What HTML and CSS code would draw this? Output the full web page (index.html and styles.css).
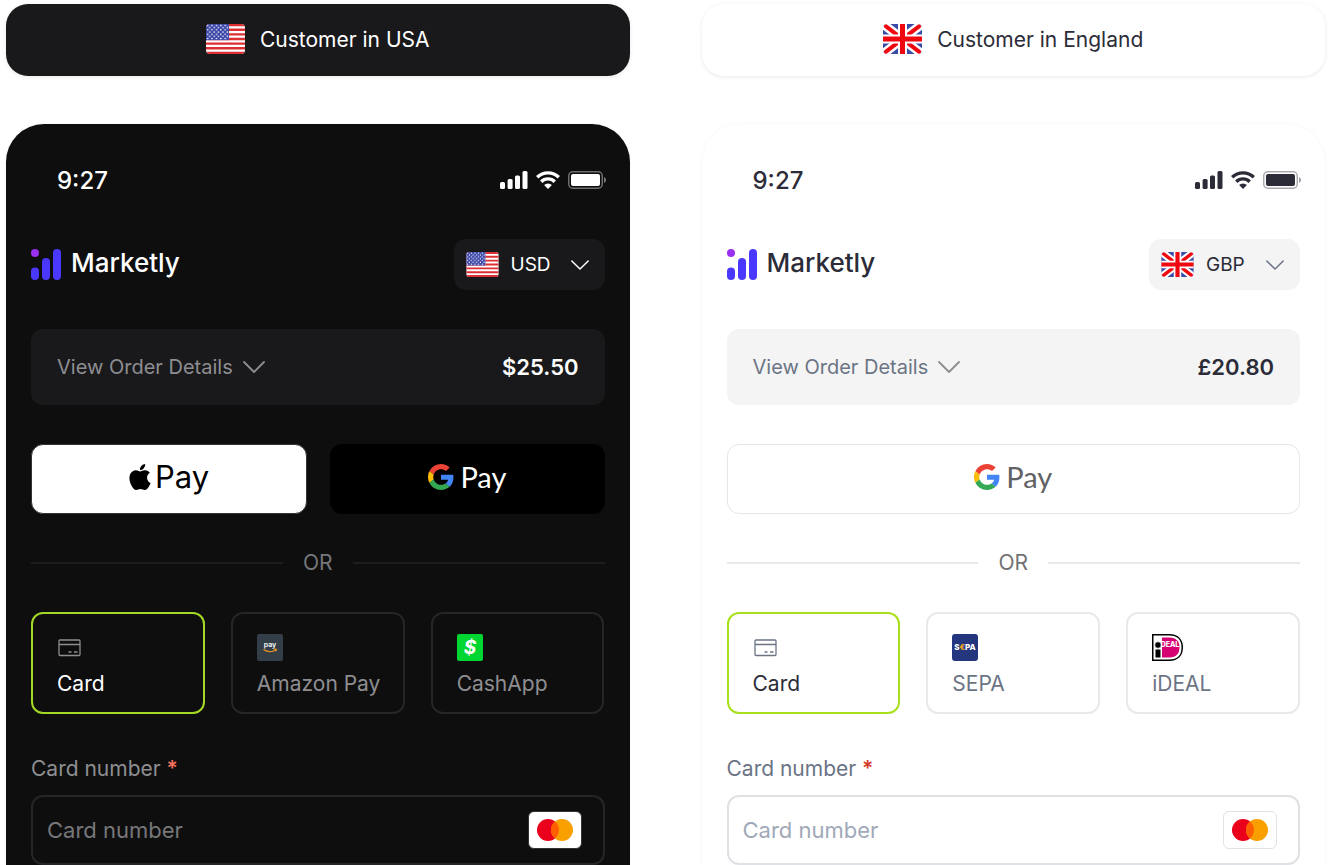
FILE: index.html
```html
<!DOCTYPE html>
<html lang="en">

<head>
  <meta charset="UTF-8" />
  <meta name="viewport" content="width=device-width, initial-scale=1.0" />
  <title>Marketly Checkout</title>
  <link rel="stylesheet" href="styles.css">
</head>

<body>
  <!-- shared icons -->
  <svg class="sprite" aria-hidden="true">
    <defs>
      <clipPath id="flag-clip"><rect width="39" height="30" rx="4" /></clipPath>
      <pattern id="stars" width="4.4" height="4.4" patternUnits="userSpaceOnUse">
        <circle cx="1.6" cy="1.4" r=".8" fill="#fff" />
        <circle cx="3.8" cy="3.6" r=".8" fill="#fff" />
      </pattern>
    </defs>
    <symbol id="flag-us" viewBox="0 0 39 30">
      <g clip-path="url(#flag-clip)">
        <rect width="39" height="30" fill="#fff" />
        <path stroke="#dc2f34" stroke-width="2.3" d="M0 1.15h39M0 5.77h39M0 10.38h39M0 15h39M0 19.62h39M0 24.23h39M0 28.85h39" />
        <rect width="23" height="16.15" fill="#3b48a8" />
        <rect width="23" height="15.6" fill="url(#stars)" />
      </g>
    </symbol>
    <symbol id="flag-gb" viewBox="0 0 39 30">
      <g clip-path="url(#flag-clip)">
        <rect width="39" height="30" fill="#3b4ba8" />
        <path stroke="#fff" stroke-width="9" d="M0 0l39 30M39 0L0 30" />
        <path stroke="#f00810" stroke-width="4" stroke-linecap="round" d="M3 2.300l33 25.400M36 2.300L3 27.700" />
        <path stroke="#fff" stroke-width="9" d="M19.5 0v30M0 15h39" />
        <path stroke="#f00810" stroke-width="5" d="M19.5 0v30M0 15h39" />
      </g>
    </symbol>
    <symbol id="signal" viewBox="0 0 28 18">
      <rect x="0" y="11" width="5" height="7" rx="1.5" />
      <rect x="7.6" y="8" width="5" height="10" rx="1.5" />
      <rect x="15" y="4.5" width="5" height="13.5" rx="1.5" />
      <rect x="22.5" y="0" width="5" height="18" rx="1.5" />
    </symbol>
    <symbol id="wifi" viewBox="0 0 24 18">
      <path fill="none" stroke="currentColor" stroke-width="3.4" d="M1.2 6.3a15.4 15.4 0 0 1 21.6 0M5.3 10.7a9.4 9.4 0 0 1 13.4 0" />
      <path d="M12 18l-3.9-4a5.6 5.6 0 0 1 7.8 0z" />
    </symbol>
    <symbol id="battery" viewBox="0 0 39 18">
      <rect x=".75" y=".75" width="33.5" height="16.5" rx="4" fill="none" stroke="currentColor" stroke-width="1.5" opacity=".4" />
      <rect x="3" y="3" width="29" height="12" rx="2" />
      <path d="M36 6a3.2 3.2 0 0 1 0 6z" opacity=".45" />
    </symbol>
    <symbol id="chevron" viewBox="0 0 22 12">
      <path fill="none" stroke="currentColor" stroke-width="1.8" stroke-linecap="round" stroke-linejoin="round" d="M1 1l10 10L21 1" />
    </symbol>
    <symbol id="logo" viewBox="0 0 30 31">
      <circle cx="4" cy="4" r="4" fill="#9b30f0" />
      <g fill="#4b38ff">
        <rect y="18.5" width="8" height="12.5" rx="4" />
        <rect x="11" y="9" width="8" height="22" rx="4" />
        <rect x="22" width="8" height="31" rx="4" />
      </g>
    </symbol>
    <symbol id="apple" viewBox="2 0 20 24">
      <path d="M12.152 6.896c-.948 0-2.415-1.078-3.96-1.04-2.04.027-3.91 1.183-4.961 3.014-2.117 3.675-.546 9.103 1.519 12.09 1.013 1.454 2.208 3.09 3.792 3.039 1.52-.065 2.09-.987 3.935-.987 1.831 0 2.35.987 3.96.948 1.637-.026 2.676-1.48 3.676-2.948 1.156-1.688 1.636-3.325 1.662-3.415-.039-.013-3.182-1.221-3.22-4.857-.026-3.04 2.48-4.494 2.597-4.559-1.429-2.09-3.623-2.324-4.39-2.376-2-.156-3.675 1.09-4.61 1.09zM15.53 3.83c.843-1.012 1.4-2.427 1.245-3.83-1.207.052-2.662.805-3.532 1.818-.78.896-1.454 2.338-1.273 3.714 1.338.104 2.715-.688 3.559-1.701" />
    </symbol>
    <symbol id="google" viewBox="0 0 48 48">
      <path fill="#ea4335" d="M24 9.5c3.54 0 6.71 1.22 9.21 3.6l6.85-6.85C35.9 2.38 30.47 0 24 0 14.62 0 6.51 5.38 2.56 13.22l7.98 6.19C12.43 13.72 17.74 9.5 24 9.5z" />
      <path fill="#4285f4" d="M46.98 24.55c0-1.57-.15-3.09-.38-4.55H24v9.02h12.94c-.58 2.96-2.26 5.48-4.78 7.18l7.73 6c4.51-4.18 7.09-10.36 7.09-17.65z" />
      <path fill="#fbbc05" d="M10.53 28.59c-.48-1.45-.76-2.99-.76-4.59s.27-3.14.76-4.59l-7.98-6.19C.92 16.46 0 20.12 0 24c0 3.88.92 7.54 2.56 10.78l7.97-6.19z" />
      <path fill="#34a853" d="M24 48c6.48 0 11.93-2.13 15.89-5.81l-7.73-6c-2.15 1.45-4.92 2.3-8.16 2.3-6.26 0-11.57-4.22-13.47-9.91l-7.98 6.19C6.51 42.62 14.62 48 24 48z" />
    </symbol>
    <symbol id="card" viewBox="0 0 26 27">
      <path fill="none" stroke="currentColor" stroke-width="1.3" d="M3 6h19a1 1 0 0 1 1 1v13.5a1 1 0 0 1-1 1H3a1 1 0 0 1-1-1V7a1 1 0 0 1 1-1zM2 10.5h21M11.500 18h3M17 18h3.500" />
    </symbol>
    <symbol id="mastercard" viewBox="0 0 36 22">
      <circle cx="11" cy="11" r="11" fill="#eb001b" />
      <circle cx="25" cy="11" r="11" fill="#f9a000" />
      <path fill="#ff5f00" d="M18 2.500a11 11 0 0 1 0 17 11 11 0 0 1 0-17z" />
    </symbol>
  </svg>

  <main class="demo">
    <section class="column dark">
      <button class="tab" type="button">
        <svg class="tab-flag"><use href="#flag-us" /></svg>
        Customer in USA
      </button>

      <div class="phone">
        <div class="status">
          <span>9:27</span>
          <div class="status-icons">
            <svg class="signal"><use href="#signal" /></svg>
            <svg class="wifi"><use href="#wifi" /></svg>
            <svg class="battery"><use href="#battery" /></svg>
          </div>
        </div>

        <form class="checkout">
          <header class="header">
            <div class="brand">
              <svg class="logo"><use href="#logo" /></svg>
              <span class="brand-name">Marketly</span>
            </div>
            <div class="currency">
              <svg class="flag"><use href="#flag-us" /></svg>
              <select aria-label="Currency">
                <option>USD</option>
                <option>GBP</option>
              </select>
              <svg class="arrow"><use href="#chevron" /></svg>
            </div>
          </header>

          <div class="order">
            <button class="order-toggle" type="button">
              View Order Details
              <svg class="chevron"><use href="#chevron" /></svg>
            </button>
            <span class="price">$25.50</span>
          </div>

          <div class="wallets">
            <button class="wallet apple-pay" type="button">
              <svg class="apple"><use href="#apple" /></svg>
              Pay
            </button>
            <button class="wallet google-pay" type="button">
              <svg class="google"><use href="#google" /></svg>
              Pay
            </button>
          </div>

          <div class="divider">OR</div>

          <div class="methods">
            <label class="method">
              <input type="radio" name="method-us" checked>
              <svg class="method-icon"><use href="#card" /></svg>
              Card
            </label>
            <label class="method">
              <input type="radio" name="method-us">
              <svg class="method-icon" viewBox="0 0 26 27">
                <rect width="26" height="27" rx="2" fill="#333e48" />
                <text class="amazon-text" x="13" y="13">pay</text>
                <path fill="none" stroke="#f79a1f" stroke-width="1.1" d="M6.5 15.5c4 2.6 9 2.6 12.3.4M17 15.2h2.400l-.6 2.200" />
              </svg>
              Amazon Pay
            </label>
            <label class="method">
              <input type="radio" name="method-us">
              <svg class="method-icon" viewBox="0 0 26 27">
                <rect width="26" height="27" rx="2" fill="#00d632" />
                <text class="cash-text" x="13" y="20">$</text>
              </svg>
              CashApp
            </label>
          </div>

          <label class="field-label" for="card-us">Card number <span class="required">*</span></label>
          <div class="field">
            <input type="text" id="card-us" placeholder="Card number" inputmode="numeric">
            <span class="card-brand"><svg class="mastercard"><use href="#mastercard" /></svg></span>
          </div>
        </form>
      </div>
    </section>

    <section class="column light">
      <button class="tab" type="button">
        <svg class="tab-flag"><use href="#flag-gb" /></svg>
        Customer in England
      </button>

      <div class="phone">
        <div class="status">
          <span>9:27</span>
          <div class="status-icons">
            <svg class="signal"><use href="#signal" /></svg>
            <svg class="wifi"><use href="#wifi" /></svg>
            <svg class="battery"><use href="#battery" /></svg>
          </div>
        </div>

        <form class="checkout">
          <header class="header">
            <div class="brand">
              <svg class="logo"><use href="#logo" /></svg>
              <span class="brand-name">Marketly</span>
            </div>
            <div class="currency">
              <svg class="flag"><use href="#flag-gb" /></svg>
              <select aria-label="Currency">
                <option>GBP</option>
                <option>USD</option>
              </select>
              <svg class="arrow"><use href="#chevron" /></svg>
            </div>
          </header>

          <div class="order">
            <button class="order-toggle" type="button">
              View Order Details
              <svg class="chevron"><use href="#chevron" /></svg>
            </button>
            <span class="price">£20.80</span>
          </div>

          <div class="wallets">
            <button class="wallet google-pay" type="button">
              <svg class="google"><use href="#google" /></svg>
              Pay
            </button>
          </div>

          <div class="divider">OR</div>

          <div class="methods">
            <label class="method">
              <input type="radio" name="method-gb" checked>
              <svg class="method-icon"><use href="#card" /></svg>
              Card
            </label>
            <label class="method">
              <input type="radio" name="method-gb">
              <svg class="method-icon" viewBox="0 0 26 27">
                <rect width="26" height="27" rx="3" fill="#24367e" />
                <text class="sepa-text" x="13" y="16">S<tspan fill="#e9a51f">€</tspan>PA</text>
              </svg>
              SEPA
            </label>
            <label class="method">
              <input type="radio" name="method-gb">
              <svg class="method-icon wide" viewBox="0 0 31 27">
                <path fill="#fff" stroke="#000" stroke-width="1.5" d="M.75.75h16.5c8.500 0 13 5 13 12.75s-4.500 12.75-13 12.75H.75z" />
                <path fill="#d50172" d="M10 3.500h7.500c6.500 0 10 3.800 10 10s-3.500 10-10 10H10z" />
                <circle cx="6" cy="11" r="3.200" fill="#000" stroke="#fff" stroke-width=".6" />
                <rect x="3.500" y="15.500" width="5" height="8" fill="#000" />
                <text class="ideal-text" x="18" y="13">DEAL</text>
              </svg>
              iDEAL
            </label>
          </div>

          <label class="field-label" for="card-gb">Card number <span class="required">*</span></label>
          <div class="field">
            <input type="text" id="card-gb" placeholder="Card number" inputmode="numeric">
            <span class="card-brand"><svg class="mastercard"><use href="#mastercard" /></svg></span>
          </div>
        </form>
      </div>
    </section>
  </main>
</body>

</html>
```
FILE: styles.css
```css
* {
  box-sizing: border-box;
}

body {
  margin: 0;
  background: #fff;
  font-family: Inter, "Liberation Sans", sans-serif;
  font-size: 21px;
}

button,
input,
select {
  margin: 0;
  padding: 0;
  border: 0;
  background: none;
  color: inherit;
  font: inherit;
}

button,
.method {
  cursor: pointer;
}

svg {
  display: block;
  flex: none;
  fill: currentColor;
}

.sprite {
  position: absolute;
  width: 0;
  height: 0;
}

.dark {
  --tab: #19191b;
  --screen: #0e0e0e;
  --panel: #19191b;
  --text: #fff;
  --muted: #8e8e92;
  --placeholder: #77777a;
  --or: #77777a;
  --line: #262628;
  --field-line: #262628;
  --card-line: #333;
  --arrow: #fff;
  --chevron: #8e8e92;
  --green: #a3d826;
  --required: #f4705c;
}

.light {
  --tab: #fff;
  --screen: #fff;
  --panel: #f4f4f4;
  --text: #2b2c38;
  --muted: #6b7485;
  --placeholder: #a1a9b8;
  --or: #727274;
  --line: #e9e9eb;
  --field-line: #dfe1e5;
  --card-line: #e3e3e5;
  --arrow: #6b7485;
  --chevron: #8e8e92;
  --green: #a8e01c;
  --required: #d63a2b;
}

.demo {
  display: grid;
  grid-template-columns: 1fr 1fr;
  gap: 72px;
  padding: 4px 6px 0;
}

.column {
  color: var(--text);
}

.tab {
  display: flex;
  align-items: center;
  justify-content: center;
  gap: 15px;
  width: 100%;
  height: 72px;
  padding-bottom: 2px;
  border-radius: 22px;
  background: var(--tab);
  box-shadow: 0 1px 4px rgba(0, 0, 0, .09);
}

.tab-flag {
  width: 39px;
  height: 30px;
}

.phone {
  margin-top: 48px;
  padding-top: 42px;
  border-radius: 38px 38px 0 0;
  background: var(--screen);
  box-shadow: 0 0 3px rgba(0, 0, 0, .05);
}

.status {
  display: flex;
  align-items: center;
  justify-content: space-between;
  padding: 0 23px 0 51px;
  font-size: 24px;
  font-weight: 500;
  line-height: 30px;
}

.status-icons {
  display: flex;
  align-items: center;
  gap: 8px;
  padding-bottom: 2px;
}

.signal {
  width: 28px;
  height: 18px;
}

.wifi {
  width: 24px;
  height: 18px;
}

.battery {
  width: 39px;
  height: 18px;
}

.checkout {
  padding: 43px 25px 0;
}

.header {
  display: flex;
  align-items: center;
  justify-content: space-between;
}

.brand {
  display: flex;
  align-items: center;
  gap: 10px;
}

.brand-name {
  padding-bottom: 4px;
  font-size: 26px;
  font-weight: 500;
  line-height: 31px;
}

.logo {
  width: 30px;
  height: 31px;
}

.currency {
  display: flex;
  align-items: center;
  width: 151px;
  height: 51px;
  padding: 0 16px 0 12px;
  border-radius: 12px;
  background: var(--panel);
  font-size: 19px;
}

.currency select {
  flex: 1;
  min-width: 0;
  margin-left: 12px;
  appearance: none;
}

.flag {
  width: 33px;
  height: 25px;
}

.arrow {
  width: 18px;
  height: 10px;
  color: var(--arrow);
}

.order {
  display: flex;
  align-items: center;
  justify-content: space-between;
  height: 76px;
  margin-top: 39px;
  padding: 0 26px;
  border-radius: 12px;
  background: var(--panel);
}

.order-toggle {
  display: flex;
  align-items: center;
  gap: 10px;
  color: var(--muted);
  font-size: 20px;
}

.chevron {
  width: 22px;
  height: 12px;
  color: var(--chevron);
}

.price {
  font-size: 22px;
  font-weight: 600;
}

.wallets {
  display: flex;
  gap: 23px;
  margin-top: 39px;
}

.wallet {
  display: flex;
  flex: 1;
  align-items: center;
  justify-content: center;
  height: 70px;
  padding-bottom: 5px;
  border-radius: 12px;
  line-height: 36px;
}

.apple-pay {
  gap: 4px;
  border: 1px solid #333;
  background: #fff;
  color: #000;
  font-size: 31px;
}

.google-pay {
  gap: 6px;
  background: #000;
  font-family: Lato, sans-serif;
  font-size: 29px;
}

.light .google-pay {
  border: 1px solid #e6e6e8;
  background: #fff;
  color: #606165;
}

.apple {
  width: 22px;
  height: 26px;
}

.google {
  width: 26px;
  height: 26px;
}

.divider {
  display: flex;
  align-items: center;
  gap: 20px;
  margin: 37px 0;
  color: var(--or);
  line-height: 24px;
}

.divider::before,
.divider::after {
  flex: 1;
  height: 2px;
  background: var(--line);
  content: '';
}

.dark .divider::before,
.dark .divider::after {
  background: #1d1d1f;
}

.methods {
  display: grid;
  grid-template-columns: repeat(3, 1fr);
  gap: 26px;
}

.method {
  position: relative;
  display: flex;
  flex-direction: column;
  gap: 9px;
  height: 102px;
  padding: 20px 0 0 24px;
  border: 2px solid var(--line);
  border-radius: 12px;
  color: var(--muted);
  line-height: 28px;
  white-space: nowrap;
}

.method input {
  position: absolute;
  opacity: 0;
}

.method:has(:checked) {
  border-color: var(--green);
  color: var(--text);
}

.method-icon {
  width: 26px;
  height: 27px;
}

.method:has(:checked) .method-icon {
  color: var(--muted);
}

.method-icon.wide {
  width: 31px;
}

.method-icon text {
  fill: #fff;
  text-anchor: middle;
}

.amazon-text {
  font-size: 7px;
  font-weight: 600;
}

.cash-text {
  font-size: 19px;
  font-style: italic;
  font-weight: 700;
}

.sepa-text {
  font-size: 8px;
  font-weight: 800;
}

.ideal-text {
  font-size: 7px;
  font-weight: 800;
}

.field-label {
  display: block;
  margin: 42px 0 13px;
  color: var(--muted);
  line-height: 26px;
}

.required {
  color: var(--required);
  font-weight: 600;
}

.field {
  display: flex;
  align-items: center;
  height: 70px;
  padding: 0 21px 0 14px;
  border: 2px solid var(--field-line);
  border-radius: 12px;
}

.field input {
  flex: 1;
  min-width: 0;
  height: 100%;
  outline: 0;
  font-size: 22px;
}

.field input::placeholder {
  color: var(--placeholder);
  opacity: 1;
}

.card-brand {
  display: flex;
  align-items: center;
  justify-content: center;
  width: 54px;
  height: 38px;
  border: 1px solid var(--card-line);
  border-radius: 6px;
  background: #fff;
}

.mastercard {
  width: 36px;
  height: 22px;
}
```
